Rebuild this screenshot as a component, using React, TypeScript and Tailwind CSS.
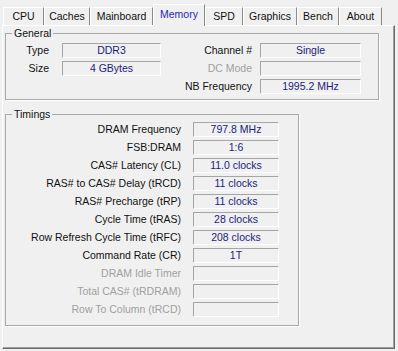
import type { ReactNode } from 'react'

const tabs = [
  { name: 'CPU', w: 'w-[41px]' },
  { name: 'Caches', w: 'w-[46px]' },
  { name: 'Mainboard', w: 'w-[63px]' },
  { name: 'Memory', w: 'w-[52px]', active: true },
  { name: 'SPD', w: 'w-[38px]' },
  { name: 'Graphics', w: 'w-[54px]' },
  { name: 'Bench', w: 'w-[42px]' },
  { name: 'About', w: 'w-[43px]' },
]

const timings: { label: string; value: string; disabled?: boolean }[] = [
  { label: 'DRAM Frequency', value: '797.8 MHz' },
  { label: 'FSB:DRAM', value: '1:6' },
  { label: 'CAS# Latency (CL)', value: '11.0 clocks' },
  { label: 'RAS# to CAS# Delay (tRCD)', value: '11 clocks' },
  { label: 'RAS# Precharge (tRP)', value: '11 clocks' },
  { label: 'Cycle Time (tRAS)', value: '28 clocks' },
  { label: 'Row Refresh Cycle Time (tRFC)', value: '208 clocks' },
  { label: 'Command Rate (CR)', value: '1T' },
  { label: 'DRAM Idle Timer', value: '', disabled: true },
  { label: 'Total CAS# (tRDRAM)', value: '', disabled: true },
  { label: 'Row To Column (tRCD)', value: '', disabled: true },
]

function Field({ value, w }: { value: string; w: string }) {
  return (
    <div
      className={`${w} h-[15px] border-t border-l border-[#a5a5a5] border-r border-b border-r-white border-b-white bg-[#f0f0f0] text-center leading-[13px] text-[#1c1c7c]`}
    >
      {value}
    </div>
  )
}

function Label({ text, w, disabled }: { text: string; w: string; disabled?: boolean }) {
  return (
    <span className={`${w} text-right leading-[15px] ${disabled ? 'text-[#a0a0a0]' : 'text-[#111]'}`}>
      {text}
    </span>
  )
}

function Group({ title, className, children }: { title: string; className: string; children: ReactNode }) {
  return (
    <fieldset className={`border border-[#a8a8a8] shadow-[1px_1px_0_#fff] px-0 ${className}`}>
      <legend className="ml-[6px] px-[2px] leading-[14px] text-[#111]">{title}</legend>
      {children}
    </fieldset>
  )
}

export default function App() {
  return (
    <div
      className="w-[398px] h-[351px] bg-[#f0f0f0] text-[10.5px] overflow-hidden"
      style={{ fontFamily: '"Liberation Sans", Arial, sans-serif' }}
    >
      {/* tab strip */}
      <div className="flex items-end h-[25px] pl-[3px]">
        {tabs.map((t) =>
          t.active ? (
            <div
              key={t.name}
              className={`${t.w} h-[22px] -mb-px relative z-10 bg-[#f0f0f0] border-l border-t border-white border-r border-r-[#8a8a8a] flex items-center justify-center pb-[2px] text-[#2a2ab0]`}
            >
              {t.name}
            </div>
          ) : (
            <div
              key={t.name}
              className={`${t.w} h-[18px] bg-[#f0f0f0] border-l border-t border-white border-r border-r-[#8a8a8a] flex items-center justify-center text-[#111]`}
            >
              {t.name}
            </div>
          )
        )}
      </div>

      {/* tab page */}
      <div className="ml-[2px] w-[393px] h-[324px] border-l border-t border-white border-r border-b border-r-[#696969] border-b-[#696969] shadow-[inset_-1px_-1px_0_#a0a0a0] pl-[2px]">
        <Group title="General" className="w-[374px] h-[74px]">
          <div className="flex flex-col gap-[3px] pt-[3px]">
            <div className="flex items-center">
              <Label text="Type" w="w-[43px]" />
              <div className="w-[13px]" />
              <Field value="DDR3" w="w-[99px]" />
              <Label text="Channel #" w="w-[91px]" />
              <div className="w-[8px]" />
              <Field value="Single" w="w-[101px]" />
            </div>
            <div className="flex items-center">
              <Label text="Size" w="w-[43px]" />
              <div className="w-[13px]" />
              <Field value="4 GBytes" w="w-[99px]" />
              <Label text="DC Mode" w="w-[91px]" disabled />
              <div className="w-[8px]" />
              <Field value="" w="w-[101px]" />
            </div>
            <div className="flex items-center pl-[155px]">
              <Label text="NB Frequency" w="w-[91px]" />
              <div className="w-[8px]" />
              <Field value="1995.2 MHz" w="w-[101px]" />
            </div>
          </div>
        </Group>

        <Group title="Timings" className="mt-[7px] w-[294px] h-[219px]">
          <div className="flex flex-col gap-[3px] pt-[1px]">
            {timings.map((r) => (
              <div key={r.label} className="flex items-center">
                <Label text={r.label} w="w-[175px]" disabled={r.disabled} />
                <div className="w-[12px]" />
                <Field value={r.value} w="w-[86px]" />
              </div>
            ))}
          </div>
        </Group>
      </div>
    </div>
  )
}
